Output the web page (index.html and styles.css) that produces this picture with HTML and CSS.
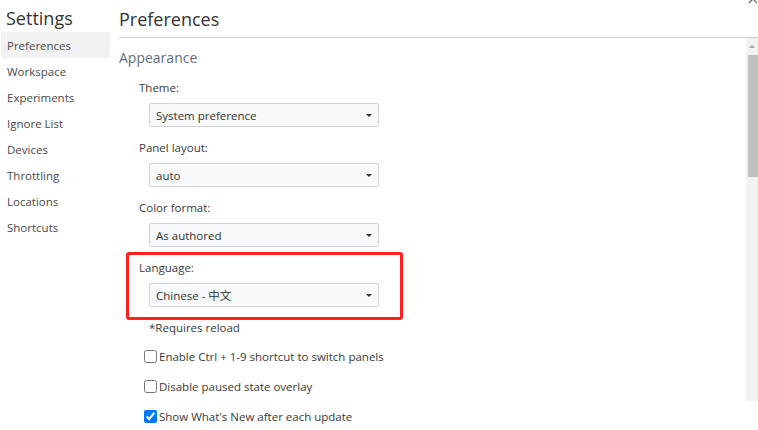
FILE: index.html
```html
<!DOCTYPE html>
<html>
<head>
<meta charset="utf-8">
<link rel="stylesheet" href="styles.css">
</head>
<body>
<div class="app">
  <aside class="sidebar">
    <div class="side-title">Settings</div>
    <div class="side-item selected">Preferences</div>
    <div class="side-item">Workspace</div>
    <div class="side-item">Experiments</div>
    <div class="side-item">Ignore List</div>
    <div class="side-item">Devices</div>
    <div class="side-item">Throttling</div>
    <div class="side-item">Locations</div>
    <div class="side-item">Shortcuts</div>
  </aside>
  <main class="main">
    <div class="main-header">Preferences</div>
    <div class="main-body">
      <div class="content">
        <div class="section-title">Appearance</div>
        <div class="field first">
          <div class="label">Theme:</div>
          <div class="select"><span>System preference</span><span class="arrow"></span></div>
        </div>
        <div class="field">
          <div class="label">Panel layout:</div>
          <div class="select"><span>auto</span><span class="arrow"></span></div>
        </div>
        <div class="field">
          <div class="label">Color format:</div>
          <div class="select"><span>As authored</span><span class="arrow"></span></div>
        </div>
        <div class="field highlight">
          <div class="label">Language:</div>
          <div class="select"><span>Chinese - 中文</span><span class="arrow"></span></div>
        </div>
        <div class="note">*Requires reload</div>
        <div class="checks">
          <label class="check"><input type="checkbox"><span>Enable Ctrl + 1-9 shortcut to switch panels</span></label>
          <label class="check"><input type="checkbox"><span>Disable paused state overlay</span></label>
          <label class="check"><input type="checkbox" checked><span>Show What's New after each update</span></label>
        </div>
      </div>
      <div class="scrollbar">
        <div class="sb-arrow"></div>
        <div class="sb-thumb"></div>
      </div>
    </div>
  </main>
  <svg class="close" width="10" height="10" viewBox="0 0 10 10"><path d="M1 1 L9 9 M9 1 L1 9" stroke="#666" stroke-width="1.2" fill="none"/></svg>
</div>
</body>
</html>
```

FILE: styles.css
```css
html, body {
  margin: 0;
  padding: 0;
  background: #ffffff;
}
body {
  font-family: "Open Sans", "Noto Sans CJK SC", sans-serif;
  font-size: 11.5px;
  color: #3a3a3a;
  width: 758px;
  height: 430px;
  overflow: hidden;
}
.app {
  display: flex;
  position: relative;
  height: 430px;
}
.sidebar {
  width: 110px;
  flex: none;
}
.side-title {
  height: 32px;
  line-height: 36px;
  font-size: 18px;
  padding-left: 6px;
  color: #333;
}
.side-item {
  height: 26px;
  line-height: 28px;
  padding-left: 6px;
  color: #4a4a4a;
  margin-left: 1px;
}
.side-item.selected {
  background: #f1f1f1;
}
.main {
  flex: 1;
  margin-left: 9px;
  display: flex;
  flex-direction: column;
}
.main-header {
  line-height: 38px;
  font-size: 18px;
  color: #333;
  border-bottom: 1px solid #cccccc;
  box-sizing: border-box;
  height: 38px;
}
.main-body {
  display: flex;
  align-items: flex-start;
}
.content {
  flex: 1;
}
.section-title {
  margin-top: 10px;
  height: 20px;
  line-height: 20px;
  font-size: 14px;
  color: #5f6f80;
}
.field {
  padding-top: 11px;
}
.field.first {
  padding-top: 10px;
}
.label {
  height: 20px;
  line-height: 20px;
  padding-left: 20px;
}
.select {
  margin-top: 5px;
  margin-left: 30px;
  width: 230px;
  height: 24px;
  box-sizing: border-box;
  border: 1px solid #cfd2d6;
  border-radius: 2px;
  background: #f8f9fa;
  display: flex;
  align-items: center;
  justify-content: space-between;
  padding: 0 6px 0 6px;
  color: #333;
}
.arrow {
  width: 0;
  height: 0;
  border-left: 3px solid transparent;
  border-right: 3px solid transparent;
  border-top: 3.5px solid #333;
}
.field.highlight {
  margin-top: 5px;
  margin-left: 7px;
  width: 277px;
  box-sizing: border-box;
  border: 3px solid #ff2020;
  border-radius: 3px;
  padding-top: 3px;
  padding-bottom: 10px;
}
.field.highlight .label {
  padding-left: 10px;
}
.field.highlight .select {
  margin-left: 20px;
}
.note {
  height: 14px;
  line-height: 16px;
  padding-left: 30px;
}
.checks {
  margin-top: 7px;
  display: flex;
  flex-direction: column;
}
.check {
  height: 30px;
  display: flex;
  align-items: center;
  padding-left: 25px;
}
.check input {
  margin: 0 2px 0 0;
  width: 13px;
  height: 13px;
}
.scrollbar {
  width: 12px;
  height: 363px;
  background: #f1f1f1;
  flex: none;
  display: flex;
  flex-direction: column;
  align-items: flex-end;
}
.sb-arrow {
  margin: 7px 3px 0 0;
  width: 0;
  height: 0;
  border-left: 3.5px solid transparent;
  border-right: 3.5px solid transparent;
  border-bottom: 3.5px solid #a3a3a3;
}
.sb-thumb {
  margin-top: 7px;
  width: 10px;
  height: 122px;
  background: #c1c1c1;
}
.close {
  position: absolute;
  right: 0;
  top: -6px;
}
```
